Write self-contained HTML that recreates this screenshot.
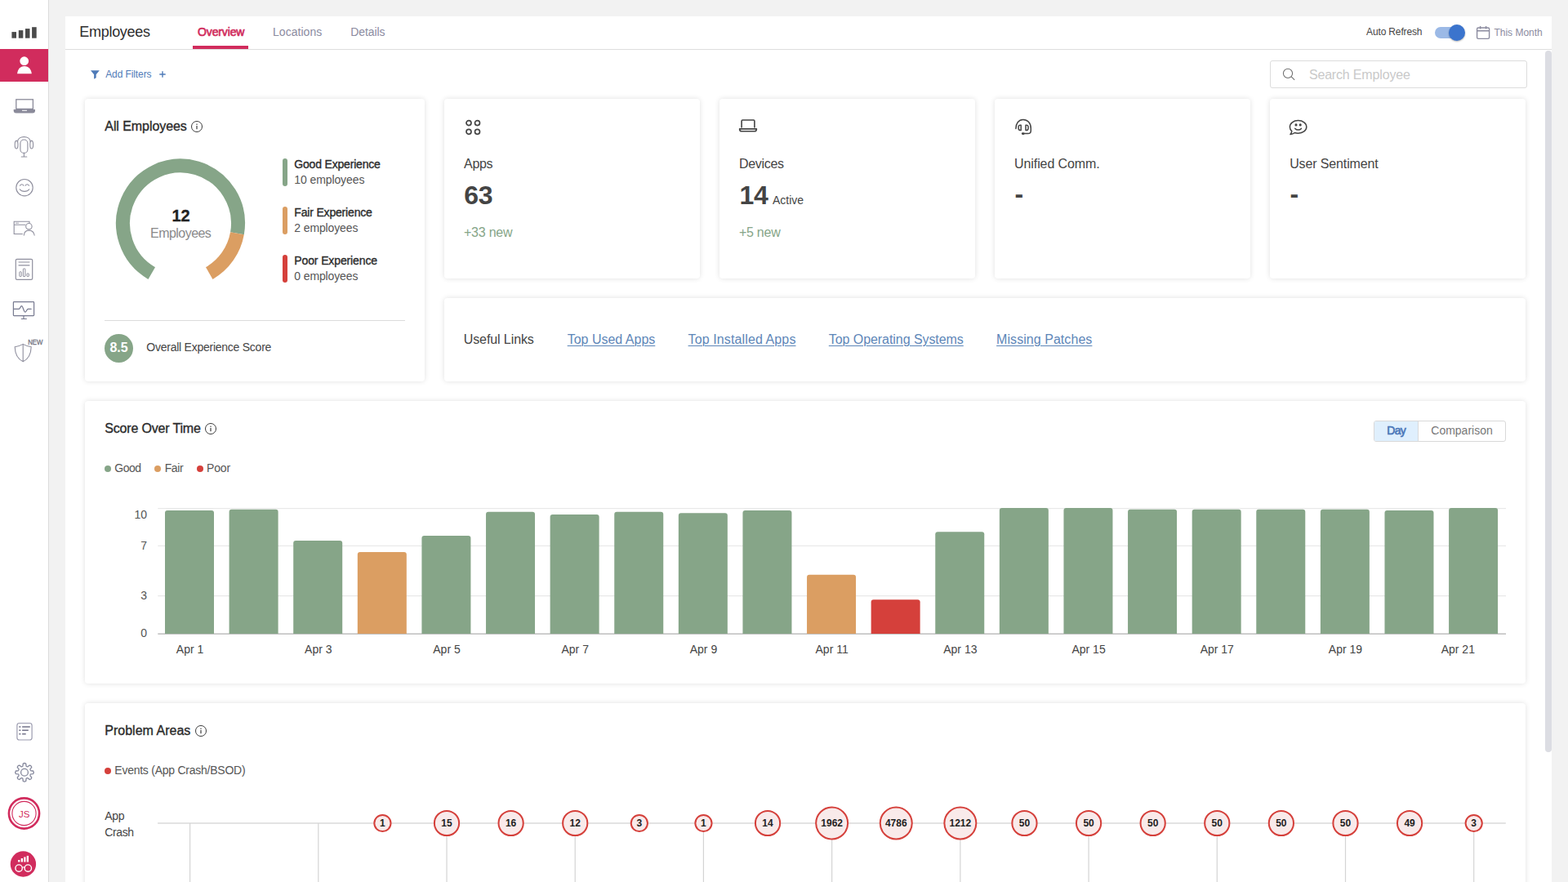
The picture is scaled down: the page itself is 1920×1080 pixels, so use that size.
<!DOCTYPE html>
<html lang="en"><head><meta charset="utf-8"><title>Employees</title>
<style>
*{box-sizing:border-box;margin:0;padding:0}
html,body{width:1920px;height:1080px;overflow:hidden;background:#f2f2f2;font-family:"Liberation Sans", sans-serif;}
.a{position:absolute}
.t{position:absolute;white-space:nowrap;}
.card{position:absolute;background:#fff;border-radius:4px;box-shadow:0 0 6px rgba(0,0,0,.125);}
#side{position:absolute;left:0;top:0;width:60px;height:1080px;background:#fff;border-right:1px solid #dcdcdc}
#main{position:absolute;left:80px;top:20px;width:1820px;height:1060px;background:#fff}
#hdr{position:absolute;left:80px;top:20px;width:1820px;height:41px;border-bottom:1px solid #dedede}
a.t{text-decoration:underline;text-underline-offset:1.5px;text-decoration-thickness:1px}
</style></head><body>

<nav aria-label="Main navigation">
<div id="side"></div>
<div class="a" style="left:0;top:60px;width:59px;height:40px;background:#d12c5d"></div>
<svg class="a" style="left:0;top:0" width="60" height="1080" viewBox="0 0 60 1080" fill="none" font-family='"Liberation Sans", sans-serif'>
<!-- logo -->
<g fill="#4a4a4a"><rect x="14.4" y="39.1" width="5.6" height="7.600"/><rect x="22.800" y="37.100" width="5.500" height="9.600"/><rect x="31" y="35.100" width="5.500" height="11.600"/><rect x="39.100" y="33.200" width="5.600" height="13.500"/></g>
<!-- active person -->
<g fill="#fff"><circle cx="29.700" cy="74.700" r="5.400"/><path d="M21.100 90.300c.5-5.600 3.800-9.400 8.800-9.400s8.400 3.800 8.900 9.400z"/></g>
<!-- laptop -->
<g stroke="#8a8a9a" stroke-width="1.300"><rect x="19.800" y="121.800" width="20.600" height="11.600"/></g>
<path d="M16.700 133.900h26.300v1.600a3 3 0 0 1-3 3H19.700a3 3 0 0 1-3-3z" fill="#8a8a9a"/><rect x="27" y="134.800" width="6" height="1" fill="#fff"/>
<!-- headset mic -->
<g stroke="#8f8f9e" stroke-width="1.1" stroke-linecap="round">
<rect x="24.900" y="171" width="9" height="16.400" rx="4.500"/><path d="M29.400 187.400v4.600M26.200 192h6.600"/>
<path d="M21.500 173.600c.3-3.500 3.500-6 7.900-6s7.600 2.500 7.900 6"/>
<ellipse cx="20.100" cy="177.200" rx="1.900" ry="4.800"/><ellipse cx="38.700" cy="177.200" rx="1.900" ry="4.800"/></g>
<!-- smiley -->
<g stroke="#8f8f9e" stroke-width="1.100" stroke-linecap="round"><circle cx="30" cy="229.700" r="10.200"/>
<path d="M24.200 231.800c1.200 1.700 3.300 2.600 5.800 2.600s4.600-.9 5.800-2.600M24.500 227.300c.5-1 1.300-1.500 2.200-1.500s1.700.5 2.200 1.500M31.100 227.300c.5-1 1.300-1.500 2.200-1.500s1.700.5 2.200 1.500"/></g>
<!-- window + person -->
<g stroke="#8f8f9e" stroke-width="1.100"><path d="M36 273.600v-2.400H17.200v15.300h10.600M17.200 275.300h14.300"/><path d="M19 273.200h4" stroke-width=".8"/>
<circle cx="35.400" cy="277.200" r="3.700" fill="#fff"/><path d="M29.200 288.500c.3-3.900 2.700-6.400 6.200-6.400s6.300 2.500 6.900 6.400"/></g>
<!-- report -->
<g stroke="#8f8f9e" stroke-width="1.200"><rect x="19.300" y="317.300" width="20.400" height="25" rx="1.600"/><path d="M22.600 321h13.800M22.600 324.800h13.800"/>
<rect x="23.900" y="332.800" width="2.300" height="5.700" rx=".5" stroke-width="1"/><rect x="28.400" y="329" width="2.500" height="9.500" rx=".5" stroke-width="1"/><rect x="33" y="334.900" width="2.300" height="3.600" rx=".5" stroke-width="1"/></g>
<!-- monitor -->
<g stroke="#777a90" stroke-width="1.200"><rect x="16.400" y="369.600" width="25.200" height="17" rx=".8"/><path d="M29 386.600v3.900M25.800 390.500h7"/>
<path d="M17 378.400h6.300c1.200 0 1.800-3.800 3.200-3.800 1.600 0 2.600 7.600 4.400 7.600 1.300 0 1.900-3.800 3.500-3.800h3.700" stroke-linecap="round"/></g>
<!-- shield -->
<g stroke="#8f8f9e" stroke-width="1.100"><path d="M28.200 421.400c-3 1.800-6.200 2.800-10 3.300.2 8.400 3.400 14.800 10 18.100 6.600-3.300 9.800-9.700 10-18.100-3.800-.5-7-1.500-10-3.300zM28.200 421.400v21.400"/></g>
<text x="34.200" y="422.300" font-size="9" fill="#74747f" stroke="#74747f" stroke-width=".3" textLength="18.300" lengthAdjust="spacingAndGlyphs">NEW</text>
<!-- list -->
<g><rect x="20.9" y="885.5" width="18.2" height="20.5" rx="2.8" stroke="#9c9cb0" stroke-width="1.2"/>
<path d="M27.1 890h9.700M27.100 894.300h7.700M27.100 898.700h4.600M23.300 890h2.100M23.300 894.300h2.100M23.300 898.700h2.100" stroke="#74748a" stroke-width="1.400"/></g>
<!-- gear -->
<g stroke="#85889c" stroke-width="1.3" stroke-linejoin="round"><circle cx="30" cy="945.8" r="4.4"/><path d="M28.00 937.95L28.19 935.25Q30.00 933.80 31.81 935.25L32.00 937.95Q32.76 939.15 34.13 938.83L36.18 937.06Q38.49 937.31 38.74 939.62L36.97 941.67Q36.65 943.04 37.85 943.80L40.55 943.99Q42.00 945.80 40.55 947.61L37.85 947.80Q36.65 948.56 36.97 949.93L38.74 951.98Q38.49 954.29 36.18 954.54L34.13 952.77Q32.76 952.45 32.00 953.65L31.81 956.35Q30.00 957.80 28.19 956.35L28.00 953.65Q27.24 952.45 25.87 952.77L23.82 954.54Q21.51 954.29 21.26 951.98L23.03 949.93Q23.35 948.56 22.15 947.80L19.45 947.61Q18.00 945.80 19.45 943.99L22.15 943.80Q23.35 943.04 23.03 941.67L21.26 939.62Q21.51 937.31 23.82 937.06L25.87 938.83Q27.24 939.15 28.00 937.95z"/></g>
<!-- JS avatar -->
<circle cx="29.500" cy="996" r="18.600" stroke="#d12c5d" stroke-width="2.600"/><circle cx="29.500" cy="996" r="14.600" stroke="#d12c5d" stroke-width="1.100"/>
<text x="29.6" y="1001" font-size="11.5" fill="#d12c5d" text-anchor="middle">JS</text>
<!-- bottom logo -->
<circle cx="28.4" cy="1058" r="15.7" fill="#d12c5d"/>
<g stroke="#fff" stroke-width="1.4"><circle cx="23.100" cy="1063.100" r="4.200"/><circle cx="34.300" cy="1063.100" r="4.200"/><path d="M27.200 1062.400c.9-.8 2.100-.8 3 0" stroke-width="1.100"/></g>
<g fill="#fff"><rect x="22.100" y="1053" width="2.300" height="2.500"/><rect x="25.700" y="1051" width="2.300" height="4.500"/><rect x="29.200" y="1049.400" width="2.300" height="6.100"/><rect x="32.700" y="1047.900" width="2.300" height="7.600"/></g>
</svg>

</nav>
<div id="main"></div><header><div id="hdr"></div>
<span class="t" id="h_title" style="top:30.00px;font-size:18px;line-height:18px;color:#2e2e2e;letter-spacing:-0.294px;left:97.30px;">Employees</span>
<span class="t" id="tab1" style="top:32.00px;font-size:14px;line-height:14px;color:#d12c5d;-webkit-text-stroke:0.65px currentColor;letter-spacing:-0.132px;left:242.00px;">Overview</span>
<div class="a" style="left:236px;top:56px;width:68px;height:4px;background:#d12c5d"></div>
<span class="t" id="tab2" style="top:32.00px;font-size:14px;line-height:14px;color:#8b8b9f;letter-spacing:0.040px;left:334.00px;">Locations</span>
<span class="t" id="tab3" style="top:32.00px;font-size:14px;line-height:14px;color:#8b8b9f;letter-spacing:-0.114px;left:429.30px;">Details</span>
<span class="t" id="autoref" style="top:33.00px;font-size:12px;line-height:12px;color:#444;letter-spacing:-0.154px;left:1673.10px;">Auto Refresh</span>
<div class="a" style="left:1757px;top:33px;width:34px;height:14px;border-radius:7px;background:#9bb9e6"></div>
<div class="a" style="left:1774px;top:30px;width:20px;height:20px;border-radius:10px;background:#3b74cd;box-shadow:0 1px 2px rgba(0,0,0,.3)"></div>
<svg class="a" style="left:1806px;top:30px" width="20" height="20" viewBox="0 0 20 20" fill="none" stroke="#8b8b9f" stroke-width="1.4"><rect x="2.6" y="4" width="15" height="13.4" rx="1.6"/><path d="M2.6 7.8h15M6.6 2v3.4M13.6 2v3.4"/></svg>
<span class="t" id="thism" style="top:34.00px;font-size:12px;line-height:12px;color:#8b8b9f;letter-spacing:0.004px;left:1829.40px;">This Month</span>
</header><main>
<div class="a" style="left:1892px;top:62px;width:8px;height:859px;border-radius:4px;background:#dcdde3"></div>
<svg class="a" style="left:110px;top:85px" width="13" height="13" viewBox="0 0 13 13"><path d="M1 1.200h10.800L7.700 6.300v3.900L5.100 11.700V6.300z" fill="#4f7bb8"/></svg>
<span class="t" id="addf" style="top:85.00px;font-size:12px;line-height:12px;color:#4f7bb8;letter-spacing:-0.096px;left:129.20px;">Add Filters</span>
<svg class="a" style="left:194px;top:86px" width="10" height="10" viewBox="0 0 10 10"><path d="M5 1.3v7.4M1.3 5h7.4" stroke="#4f7bb8" stroke-width="1.4"/></svg>
<div class="a" style="left:1555px;top:74px;width:315px;height:34px;border:1px solid #dcdcdc;border-radius:3px;background:#fff"></div>
<svg class="a" style="left:1568px;top:81px" width="20" height="20" viewBox="0 0 20 20" fill="none" stroke="#6e6e6e" stroke-width="1.05"><circle cx="9" cy="8.8" r="5.6"/><path d="M13.2 12.8l4 4"/></svg>
<span class="t" id="search" style="top:84.00px;font-size:16px;line-height:16px;color:#c9c9c9;letter-spacing:-0.167px;left:1602.90px;">Search Employee</span>
<section aria-label="All Employees">
<div class="card" style="left:104px;top:121px;width:416px;height:346px"></div>
<span class="t" id="allemp" style="top:147.00px;font-size:16px;line-height:16px;color:#2b2b2b;-webkit-text-stroke:0.35px currentColor;letter-spacing:-0.075px;left:128.30px;">All Employees</span>
<svg class="a" style="left:233px;top:146.8px" width="16" height="16" viewBox="0 0 16 16"><circle cx="8" cy="8" r="6.5" fill="none" stroke="#3a3a3a" stroke-width="1"/><rect x="7.4" y="7" width="1.2" height="4.2" fill="#3a3a3a"/><circle cx="8" cy="5.3" r="0.75" fill="#3a3a3a"/></svg>
<svg class="a" style="left:0;top:0" width="600" height="400" viewBox="0 0 600 400">
<path d="M185.75 334.55A70.5 70.5 0 1 1 290.43 285.74" stroke="#86a588" stroke-width="17" fill="none"/>
<path d="M290.43 285.74A70.5 70.5 0 0 1 256.25 334.55" stroke="#db9e62" stroke-width="17" fill="none"/>
</svg>
<span class="t" id="g12" style="top:254.00px;font-size:20px;line-height:20px;color:#222;font-weight:700;letter-spacing:-0.330px;left:221.40px;transform:translateX(-50%);-webkit-text-stroke:0.3px #222;">12</span>
<span class="t" id="gemp" style="top:278.00px;font-size:16px;line-height:16px;color:#8a8a8a;letter-spacing:-0.540px;left:221.20px;transform:translateX(-50%);">Employees</span>
<div class="a" style="left:346px;top:194px;width:6px;height:34px;border-radius:3px;background:#86a588"></div>
<span class="t" id="lg0a" style="top:194.00px;font-size:14px;line-height:14px;color:#2b2b2b;-webkit-text-stroke:0.35px currentColor;letter-spacing:-0.185px;left:360.30px;">Good Experience</span>
<span class="t" id="lg0b" style="top:213.00px;font-size:14px;line-height:14px;color:#555;letter-spacing:-0.098px;left:360.30px;">10 employees</span>
<div class="a" style="left:346px;top:253px;width:6px;height:34px;border-radius:3px;background:#db9e62"></div>
<span class="t" id="lg1a" style="top:253.00px;font-size:14px;line-height:14px;color:#2b2b2b;-webkit-text-stroke:0.35px currentColor;letter-spacing:-0.176px;left:360.30px;">Fair Experience</span>
<span class="t" id="lg1b" style="top:272.00px;font-size:14px;line-height:14px;color:#555;letter-spacing:-0.126px;left:360.30px;">2 employees</span>
<div class="a" style="left:346px;top:312px;width:6px;height:34px;border-radius:3px;background:#d5403b"></div>
<span class="t" id="lg2a" style="top:312.00px;font-size:14px;line-height:14px;color:#2b2b2b;-webkit-text-stroke:0.35px currentColor;letter-spacing:-0.121px;left:360.30px;">Poor Experience</span>
<span class="t" id="lg2b" style="top:331.00px;font-size:14px;line-height:14px;color:#555;letter-spacing:-0.126px;left:360.30px;">0 employees</span>
<div class="a" style="left:128px;top:392px;width:368px;height:1px;background:#dcdcdc"></div>
<div class="a" style="left:128px;top:409px;width:35px;height:35px;border-radius:50%;background:#86a588"></div>
<span class="t" id="s85" style="top:418.00px;font-size:16px;line-height:16px;color:#fff;font-weight:700;letter-spacing:-0.016px;left:145.50px;transform:translateX(-50%);">8.5</span>
<span class="t" id="oes" style="top:418.00px;font-size:14px;line-height:14px;color:#444;letter-spacing:-0.248px;left:179.30px;">Overall Experience Score</span>
</section><section aria-label="Summary">
<div class="card" style="left:544px;top:121px;width:313px;height:220px"></div>
<div class="card" style="left:881px;top:121px;width:313px;height:220px"></div>
<div class="card" style="left:1218px;top:121px;width:313px;height:220px"></div>
<div class="card" style="left:1555px;top:121px;width:313px;height:220px"></div>
<svg class="a" style="left:568px;top:145px" width="22" height="22" viewBox="0 0 22 22" fill="none" stroke="#444" stroke-width="1.7"><circle cx="6" cy="5.6" r="3"/><circle cx="16.5" cy="5.6" r="3"/><circle cx="6" cy="16.3" r="3"/><circle cx="16.5" cy="16.3" r="3"/></svg>
<svg class="a" style="left:904px;top:145px" width="24" height="18" viewBox="0 0 24 18" fill="none" stroke="#444" stroke-width="1.6" stroke-linejoin="round"><path d="M4.1 11.600V3.200a1.200 1.200 0 0 1 1.200-1.200h13.400a1.200 1.200 0 0 1 1.200 1.200v8.400"/><path d="M1.6 12.9h20.8c0 1.6-1 2.9-2.6 2.9H4.2c-1.6 0-2.6-1.3-2.6-2.9z"/></svg>
<svg class="a" style="left:1241px;top:143px" width="24" height="24" viewBox="0 0 24 24" fill="none" stroke="#444" stroke-width="1.5" stroke-linecap="round" stroke-linejoin="round"><path d="M2.9 14.6C2.9 8 6.500 3.400 11.800 3.400S21.300 7.500 21.300 14.200v2.800c0 2.300-1.300 3.600-3.600 3.600H13.500"/><path d="M9.200 10.200v6.300H8.300a2.200 2.200 0 0 1-2.200-2.200v-1.900a2.200 2.200 0 0 1 2.200-2.200zM15 10.200v6.300h.9a2.200 2.200 0 0 0 2.200-2.200v-1.900a2.200 2.200 0 0 0-2.200-2.200z"/><rect x="9.900" y="19.300" width="3.800" height="2.600" rx="1.300" fill="#444" stroke="none"/></svg>
<svg class="a" style="left:1577px;top:144px" width="26" height="24" viewBox="0 0 26 24" fill="none" stroke="#444" stroke-width="1.5" stroke-linecap="round" stroke-linejoin="round"><path d="M4.8 16.6C3.2 15.2 2.4 13.4 2.4 11.4 2.4 7 6.9 3.6 12.6 3.6s10.2 3.4 10.2 7.8-4.5 7.8-10.2 7.8c-1.5 0-2.9-.2-4.2-.7-1.4 1.1-3.2 1.9-5.4 2.1 1-1.200 1.600-2.600 1.800-4z"/><circle cx="10" cy="8.900" r=".8" fill="#444"/><circle cx="15.200" cy="8.900" r=".8" fill="#444"/><path d="M8.8 13.4c1 1.100 2.300 1.700 3.800 1.700s2.800-.6 3.800-1.700"/></svg>
<span class="t" id="apps" style="top:193.00px;font-size:16px;line-height:16px;color:#444;letter-spacing:-0.292px;left:568.00px;">Apps</span>
<span class="t" id="n63" style="top:223.00px;font-size:32px;line-height:32px;color:#444;font-weight:700;letter-spacing:-0.147px;left:568.20px;">63</span>
<span class="t" id="p33" style="top:277.00px;font-size:16px;line-height:16px;color:#86a588;letter-spacing:-0.236px;left:568.00px;">+33 new</span>
<span class="t" id="devices" style="top:193.00px;font-size:16px;line-height:16px;color:#444;letter-spacing:-0.303px;left:904.90px;">Devices</span>
<span class="t" id="n14" style="top:223.00px;font-size:32px;line-height:32px;color:#444;font-weight:700;letter-spacing:-0.101px;left:905.40px;">14</span>
<span class="t" id="active" style="top:238.00px;font-size:14px;line-height:14px;color:#444;letter-spacing:-0.021px;left:946.00px;">Active</span>
<span class="t" id="p5" style="top:277.00px;font-size:16px;line-height:16px;color:#86a588;letter-spacing:-0.240px;left:904.90px;">+5 new</span>
<span class="t" id="uc" style="top:193.00px;font-size:16px;line-height:16px;color:#444;letter-spacing:-0.101px;left:1242.10px;">Unified Comm.</span>
<span class="t" id="dash1" style="top:221.00px;font-size:32px;line-height:32px;color:#444;font-weight:700;left:1242.40px;">-</span>
<span class="t" id="us" style="top:193.00px;font-size:16px;line-height:16px;color:#444;letter-spacing:-0.133px;left:1579.20px;">User Sentiment</span>
<span class="t" id="dash2" style="top:221.00px;font-size:32px;line-height:32px;color:#444;font-weight:700;left:1579.40px;">-</span>
</section><section aria-label="Useful Links">
<div class="card" style="left:544px;top:365px;width:1324px;height:102px"></div>
<span class="t" id="ul" style="top:408.00px;font-size:16px;line-height:16px;color:#444;letter-spacing:-0.088px;left:567.70px;">Useful Links</span>
<a href="#" class="t" id="l1" style="top:408.00px;font-size:16px;line-height:16px;color:#5d86b8;letter-spacing:-0.003px;left:694.70px;">Top Used Apps</a>
<a href="#" class="t" id="l2" style="top:408.00px;font-size:16px;line-height:16px;color:#5d86b8;letter-spacing:0.113px;left:842.60px;">Top Installed Apps</a>
<a href="#" class="t" id="l3" style="top:408.00px;font-size:16px;line-height:16px;color:#5d86b8;letter-spacing:-0.062px;left:1014.80px;">Top Operating Systems</a>
<a href="#" class="t" id="l4" style="top:408.00px;font-size:16px;line-height:16px;color:#5d86b8;letter-spacing:0.053px;left:1220.10px;">Missing Patches</a>
</section><section aria-label="Score Over Time">
<div class="card" style="left:104px;top:491px;width:1764px;height:346px"></div>
<span class="t" id="sot" style="top:517.00px;font-size:16px;line-height:16px;color:#2b2b2b;-webkit-text-stroke:0.35px currentColor;letter-spacing:-0.176px;left:128.30px;">Score Over Time</span>
<svg class="a" style="left:250px;top:516.8px" width="16" height="16" viewBox="0 0 16 16"><circle cx="8" cy="8" r="6.5" fill="none" stroke="#3a3a3a" stroke-width="1"/><rect x="7.4" y="7" width="1.2" height="4.2" fill="#3a3a3a"/><circle cx="8" cy="5.3" r="0.75" fill="#3a3a3a"/></svg>
<div class="a" style="left:1682px;top:515px;width:162px;height:26px;border:1px solid #d9d9d9;border-radius:3px;background:#fff"></div>
<div class="a" style="left:1683px;top:516px;width:54px;height:24px;border-right:1px solid #d9d9d9;border-radius:2px 0 0 2px;background:#dfeffd"></div>
<span class="t" id="day" style="top:520.00px;font-size:14px;line-height:14px;color:#4c78b9;-webkit-text-stroke:0.65px currentColor;letter-spacing:-0.734px;left:1698.30px;">Day</span>
<span class="t" id="cmp" style="top:520.00px;font-size:14px;line-height:14px;color:#777;letter-spacing:-0.008px;left:1752.30px;">Comparison</span>
<div class="a" style="left:128px;top:570px;width:8px;height:8px;border-radius:50%;background:#86a588"></div>
<span class="t" id="sl0" style="top:566.00px;font-size:14px;line-height:14px;color:#555;letter-spacing:-0.463px;left:140.30px;">Good</span>
<div class="a" style="left:189px;top:570px;width:8px;height:8px;border-radius:50%;background:#db9e62"></div>
<span class="t" id="sl1" style="top:566.00px;font-size:14px;line-height:14px;color:#555;letter-spacing:-0.381px;left:201.70px;">Fair</span>
<div class="a" style="left:241px;top:570px;width:8px;height:8px;border-radius:50%;background:#d5403b"></div>
<span class="t" id="sl2" style="top:566.00px;font-size:14px;line-height:14px;color:#555;letter-spacing:-0.145px;left:253.00px;">Poor</span>
<svg class="a" style="left:0;top:600px" width="1920" height="200" viewBox="0 600 1920 200">
<rect x="193.3" y="622" width="1650.7" height="1.2" fill="#e8e8e8"/>
<rect x="193.3" y="667.8" width="1650.7" height="1.2" fill="#e8e8e8"/>
<rect x="193.3" y="729" width="1650.7" height="1.25" fill="#e8e8e8"/>
<rect x="193.3" y="775.4" width="1650.7" height="1.6" fill="#c2c2c2"/>
<path d="M202.00 776V628.00a3 3 0 0 1 3-3h54a3 3 0 0 1 3 3V776z" fill="#86a588"/>
<path d="M280.61 776V626.70a3 3 0 0 1 3-3h54a3 3 0 0 1 3 3V776z" fill="#86a588"/>
<path d="M359.21 776V665.00a3 3 0 0 1 3-3h54a3 3 0 0 1 3 3V776z" fill="#86a588"/>
<path d="M437.82 776V679.00a3 3 0 0 1 3-3h54a3 3 0 0 1 3 3V776z" fill="#db9e62"/>
<path d="M516.42 776V659.00a3 3 0 0 1 3-3h54a3 3 0 0 1 3 3V776z" fill="#86a588"/>
<path d="M595.03 776V629.70a3 3 0 0 1 3-3h54a3 3 0 0 1 3 3V776z" fill="#86a588"/>
<path d="M673.63 776V633.00a3 3 0 0 1 3-3h54a3 3 0 0 1 3 3V776z" fill="#86a588"/>
<path d="M752.24 776V629.70a3 3 0 0 1 3-3h54a3 3 0 0 1 3 3V776z" fill="#86a588"/>
<path d="M830.84 776V631.30a3 3 0 0 1 3-3h54a3 3 0 0 1 3 3V776z" fill="#86a588"/>
<path d="M909.45 776V628.00a3 3 0 0 1 3-3h54a3 3 0 0 1 3 3V776z" fill="#86a588"/>
<path d="M988.05 776V706.70a3 3 0 0 1 3-3h54a3 3 0 0 1 3 3V776z" fill="#db9e62"/>
<path d="M1066.65 776V737.30a3 3 0 0 1 3-3h54a3 3 0 0 1 3 3V776z" fill="#d5403b"/>
<path d="M1145.26 776V654.30a3 3 0 0 1 3-3h54a3 3 0 0 1 3 3V776z" fill="#86a588"/>
<path d="M1223.86 776V625.00a3 3 0 0 1 3-3h54a3 3 0 0 1 3 3V776z" fill="#86a588"/>
<path d="M1302.47 776V625.00a3 3 0 0 1 3-3h54a3 3 0 0 1 3 3V776z" fill="#86a588"/>
<path d="M1381.07 776V626.70a3 3 0 0 1 3-3h54a3 3 0 0 1 3 3V776z" fill="#86a588"/>
<path d="M1459.68 776V626.70a3 3 0 0 1 3-3h54a3 3 0 0 1 3 3V776z" fill="#86a588"/>
<path d="M1538.28 776V626.70a3 3 0 0 1 3-3h54a3 3 0 0 1 3 3V776z" fill="#86a588"/>
<path d="M1616.89 776V626.70a3 3 0 0 1 3-3h54a3 3 0 0 1 3 3V776z" fill="#86a588"/>
<path d="M1695.49 776V628.00a3 3 0 0 1 3-3h54a3 3 0 0 1 3 3V776z" fill="#86a588"/>
<path d="M1774.10 776V625.00a3 3 0 0 1 3-3h54a3 3 0 0 1 3 3V776z" fill="#86a588"/>
</svg>
<span class="t" id="y10" style="top:623.00px;font-size:14px;line-height:14px;color:#555;left:180.00px;transform:translateX(-100%);">10</span>
<span class="t" id="y7" style="top:661.00px;font-size:14px;line-height:14px;color:#555;left:180.00px;transform:translateX(-100%);">7</span>
<span class="t" id="y3" style="top:722.00px;font-size:14px;line-height:14px;color:#555;left:180.00px;transform:translateX(-100%);">3</span>
<span class="t" id="y0" style="top:768.00px;font-size:14px;line-height:14px;color:#555;left:180.00px;transform:translateX(-100%);">0</span>
<span class="t" id="x0" style="top:788.00px;font-size:14px;line-height:14px;color:#444;left:232.60px;transform:translateX(-50%);">Apr 1</span>
<span class="t" id="x2" style="top:788.00px;font-size:14px;line-height:14px;color:#444;left:389.81px;transform:translateX(-50%);">Apr 3</span>
<span class="t" id="x4" style="top:788.00px;font-size:14px;line-height:14px;color:#444;left:547.02px;transform:translateX(-50%);">Apr 5</span>
<span class="t" id="x6" style="top:788.00px;font-size:14px;line-height:14px;color:#444;left:704.23px;transform:translateX(-50%);">Apr 7</span>
<span class="t" id="x8" style="top:788.00px;font-size:14px;line-height:14px;color:#444;left:861.44px;transform:translateX(-50%);">Apr 9</span>
<span class="t" id="x10" style="top:788.00px;font-size:14px;line-height:14px;color:#444;left:1018.65px;transform:translateX(-50%);">Apr 11</span>
<span class="t" id="x12" style="top:788.00px;font-size:14px;line-height:14px;color:#444;left:1175.86px;transform:translateX(-50%);">Apr 13</span>
<span class="t" id="x14" style="top:788.00px;font-size:14px;line-height:14px;color:#444;left:1333.07px;transform:translateX(-50%);">Apr 15</span>
<span class="t" id="x16" style="top:788.00px;font-size:14px;line-height:14px;color:#444;left:1490.28px;transform:translateX(-50%);">Apr 17</span>
<span class="t" id="x18" style="top:788.00px;font-size:14px;line-height:14px;color:#444;left:1647.49px;transform:translateX(-50%);">Apr 19</span>
<span class="t" id="x20" style="top:788.00px;font-size:14px;line-height:14px;color:#444;left:1785.30px;transform:translateX(-50%);">Apr 21</span>
</section><section aria-label="Problem Areas">
<div class="card" style="left:104px;top:861px;width:1764px;height:300px"></div>
<span class="t" id="pa" style="top:887.00px;font-size:16px;line-height:16px;color:#2b2b2b;-webkit-text-stroke:0.35px currentColor;letter-spacing:0.004px;left:128.30px;">Problem Areas</span>
<svg class="a" style="left:238px;top:886.8px" width="16" height="16" viewBox="0 0 16 16"><circle cx="8" cy="8" r="6.5" fill="none" stroke="#3a3a3a" stroke-width="1"/><rect x="7.4" y="7" width="1.2" height="4.2" fill="#3a3a3a"/><circle cx="8" cy="5.3" r="0.75" fill="#3a3a3a"/></svg>
<div class="a" style="left:128px;top:940px;width:8px;height:8px;border-radius:50%;background:#d5403b"></div>
<span class="t" id="ev" style="top:936.00px;font-size:14px;line-height:14px;color:#555;letter-spacing:-0.249px;left:140.30px;">Events (App Crash/BSOD)</span>
<span class="t" id="app" style="top:992.00px;font-size:14px;line-height:14px;color:#444;letter-spacing:-0.307px;left:128.30px;">App</span>
<span class="t" id="crash" style="top:1012.00px;font-size:14px;line-height:14px;color:#444;letter-spacing:-0.390px;left:128.30px;">Crash</span>
<span class="t" id="blue" style="top:1080.00px;font-size:14px;line-height:14px;color:#444;left:128.30px;">Blue</span>
<span class="t" id="screen" style="top:1100.00px;font-size:14px;line-height:14px;color:#444;left:128.30px;">Screen</span>
<svg class="a" style="left:0;top:980px" width="1920" height="100" viewBox="0 980 1920 100" font-family='"Liberation Sans", sans-serif'>
<rect x="193.10000000000002" y="1007" width="1650.7" height="2" fill="#e3e3e3"/>
<rect x="232.00" y="1008" width="1.2" height="80" fill="#d4d4d4"/>
<rect x="389.21" y="1008" width="1.2" height="80" fill="#d4d4d4"/>
<rect x="546.42" y="1008" width="1.2" height="80" fill="#d4d4d4"/>
<rect x="703.63" y="1008" width="1.2" height="80" fill="#d4d4d4"/>
<rect x="860.84" y="1008" width="1.2" height="80" fill="#d4d4d4"/>
<rect x="1018.05" y="1008" width="1.2" height="80" fill="#d4d4d4"/>
<rect x="1175.26" y="1008" width="1.2" height="80" fill="#d4d4d4"/>
<rect x="1332.47" y="1008" width="1.2" height="80" fill="#d4d4d4"/>
<rect x="1489.68" y="1008" width="1.2" height="80" fill="#d4d4d4"/>
<rect x="1646.89" y="1008" width="1.2" height="80" fill="#d4d4d4"/>
<rect x="1804.10" y="1008" width="1.2" height="80" fill="#d4d4d4"/>
<circle cx="468.42" cy="1008" r="10.1" fill="#f9eaea" stroke="#d5403b" stroke-width="2"/>
<text x="468.42" y="1012" text-anchor="middle" font-size="12" font-weight="700" fill="#222">1</text>
<circle cx="547.02" cy="1008" r="15.1" fill="#f9eaea" stroke="#d5403b" stroke-width="2"/>
<text x="547.02" y="1012" text-anchor="middle" font-size="12" font-weight="700" fill="#222">15</text>
<circle cx="625.63" cy="1008" r="15.1" fill="#f9eaea" stroke="#d5403b" stroke-width="2"/>
<text x="625.63" y="1012" text-anchor="middle" font-size="12" font-weight="700" fill="#222">16</text>
<circle cx="704.23" cy="1008" r="15.1" fill="#f9eaea" stroke="#d5403b" stroke-width="2"/>
<text x="704.23" y="1012" text-anchor="middle" font-size="12" font-weight="700" fill="#222">12</text>
<circle cx="782.84" cy="1008" r="10.1" fill="#f9eaea" stroke="#d5403b" stroke-width="2"/>
<text x="782.84" y="1012" text-anchor="middle" font-size="12" font-weight="700" fill="#222">3</text>
<circle cx="861.44" cy="1008" r="10.1" fill="#f9eaea" stroke="#d5403b" stroke-width="2"/>
<text x="861.44" y="1012" text-anchor="middle" font-size="12" font-weight="700" fill="#222">1</text>
<circle cx="940.05" cy="1008" r="15.1" fill="#f9eaea" stroke="#d5403b" stroke-width="2"/>
<text x="940.05" y="1012" text-anchor="middle" font-size="12" font-weight="700" fill="#222">14</text>
<circle cx="1018.65" cy="1008" r="19.5" fill="#f9eaea" stroke="#d5403b" stroke-width="2"/>
<text x="1018.65" y="1012" text-anchor="middle" font-size="12" font-weight="700" fill="#222">1962</text>
<circle cx="1097.25" cy="1008" r="19.5" fill="#f9eaea" stroke="#d5403b" stroke-width="2"/>
<text x="1097.25" y="1012" text-anchor="middle" font-size="12" font-weight="700" fill="#222">4786</text>
<circle cx="1175.86" cy="1008" r="19.5" fill="#f9eaea" stroke="#d5403b" stroke-width="2"/>
<text x="1175.86" y="1012" text-anchor="middle" font-size="12" font-weight="700" fill="#222">1212</text>
<circle cx="1254.46" cy="1008" r="15.1" fill="#f9eaea" stroke="#d5403b" stroke-width="2"/>
<text x="1254.46" y="1012" text-anchor="middle" font-size="12" font-weight="700" fill="#222">50</text>
<circle cx="1333.07" cy="1008" r="15.1" fill="#f9eaea" stroke="#d5403b" stroke-width="2"/>
<text x="1333.07" y="1012" text-anchor="middle" font-size="12" font-weight="700" fill="#222">50</text>
<circle cx="1411.67" cy="1008" r="15.1" fill="#f9eaea" stroke="#d5403b" stroke-width="2"/>
<text x="1411.67" y="1012" text-anchor="middle" font-size="12" font-weight="700" fill="#222">50</text>
<circle cx="1490.28" cy="1008" r="15.1" fill="#f9eaea" stroke="#d5403b" stroke-width="2"/>
<text x="1490.28" y="1012" text-anchor="middle" font-size="12" font-weight="700" fill="#222">50</text>
<circle cx="1568.88" cy="1008" r="15.1" fill="#f9eaea" stroke="#d5403b" stroke-width="2"/>
<text x="1568.88" y="1012" text-anchor="middle" font-size="12" font-weight="700" fill="#222">50</text>
<circle cx="1647.49" cy="1008" r="15.1" fill="#f9eaea" stroke="#d5403b" stroke-width="2"/>
<text x="1647.49" y="1012" text-anchor="middle" font-size="12" font-weight="700" fill="#222">50</text>
<circle cx="1726.09" cy="1008" r="15.1" fill="#f9eaea" stroke="#d5403b" stroke-width="2"/>
<text x="1726.09" y="1012" text-anchor="middle" font-size="12" font-weight="700" fill="#222">49</text>
<circle cx="1804.70" cy="1008" r="10.1" fill="#f9eaea" stroke="#d5403b" stroke-width="2"/>
<text x="1804.70" y="1012" text-anchor="middle" font-size="12" font-weight="700" fill="#222">3</text>
</svg>
</section></main>
</body></html>
